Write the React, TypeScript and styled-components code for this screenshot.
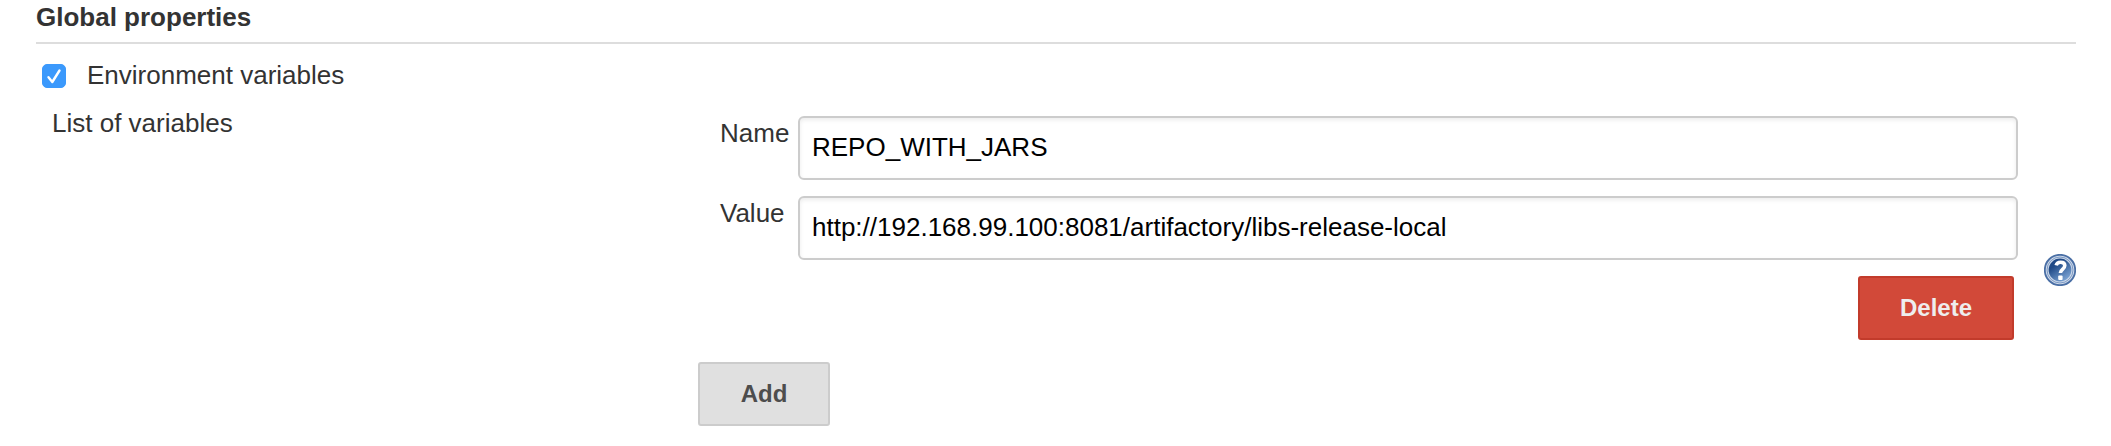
import React, { useState } from "react";
import styled, { createGlobalStyle } from "styled-components";

const GlobalStyle = createGlobalStyle`
  *, *::before, *::after { box-sizing: border-box; }
  body {
    margin: 0;
    background: #fff;
    color: #333;
    font-family: Helvetica, "Liberation Sans", Arial, sans-serif;
    font-size: 26px;
    line-height: 30px;
  }
`;

const Page = styled.main`
  padding: 2px 35px 14px 36px;
`;

const SectionTitle = styled.h2`
  margin: 0;
  padding-bottom: 10px;
  border-bottom: 2px solid #ddd;
  font-size: 26px;
  line-height: 30px;
  font-weight: bold;
`;

const OptionRow = styled.label`
  display: flex;
  align-items: flex-start;
  gap: 21px;
  padding: 16px 6px 18px;
`;

const CheckBox = styled.span`
  display: grid;
  width: 24px;
  height: 24px;
  margin-top: 4px;

  & > * {
    grid-area: 1 / 1;
  }
`;

const CheckInput = styled.input`
  appearance: none;
  width: 24px;
  height: 24px;
  margin: 0;
  border: 1px solid #b5b5b5;
  border-radius: 5px;
  background: #fff;

  &:checked {
    border-color: #3b99fc;
    background: #3b99fc;
  }
`;

const Tick = styled.svg`
  width: 24px;
  height: 24px;
  pointer-events: none;
`;

const SettingRow = styled.section`
  display: grid;
  grid-template-columns: 662fr 1346fr 32px;
`;

const SettingName = styled.div`
  padding-left: 16px;
`;

const SettingMain = styled.div`
  margin-right: 26px;
  padding: 8px 0 6px;
`;

const Variable = styled.div`
  display: flex;
  flex-direction: column;
  gap: 16px;
  padding-left: 22px;
`;

const Field = styled.div`
  display: grid;
  grid-template-columns: 78px 1fr;
`;

const FieldLabel = styled.label`
  padding-top: 2px;
`;

const TextInput = styled.input`
  width: 100%;
  height: 64px;
  padding: 0 12px 2px;
  border: 2px solid #ccc;
  border-radius: 6px;
  background: #fff;
  box-shadow: inset 0 2px 4px rgba(0, 0, 0, 0.08);
  color: #000;
  font: inherit;
`;

const Actions = styled.div<{ $end?: boolean }>`
  display: flex;
  justify-content: ${(p) => (p.$end ? "flex-end" : "flex-start")};
  padding-right: 4px;
`;

const AddRow = styled(Actions)`
  padding-top: 22px;
`;

const Button = styled.button<{ $danger?: boolean }>`
  height: 64px;
  min-width: 132px;
  padding: 0 40px;
  border: 2px solid ${(p) => (p.$danger ? "#c23b2b" : "#ccc")};
  border-radius: 3px;
  background: ${(p) => (p.$danger ? "#d24939" : "#e0e0e0")};
  color: ${(p) => (p.$danger ? "#eee" : "#4d4d4d")};
  font-family: inherit;
  font-size: 24px;
  font-weight: bold;
  line-height: 30px;
`;

const HelpButton = styled.button`
  align-self: center;
  width: 32px;
  height: 32px;
  padding: 0;
  border: 0;
  background: none;

  svg {
    display: block;
  }
`;

function HelpIcon() {
  return (
    <svg width="32" height="32" viewBox="0 0 32 32" aria-hidden="true">
      <defs>
        <linearGradient id="disc" x1="0.2" y1="0.1" x2="0.8" y2="0.95">
          <stop offset="0.2" stopColor="#204a87" />
          <stop offset="1" stopColor="#7ea6d6" />
        </linearGradient>
      </defs>
      <circle cx="16" cy="16" r="15.2" fill="#cfdaea" stroke="#4a6fa5" strokeWidth="1.8" />
      <circle cx="16" cy="16" r="13" fill="none" stroke="#7d9ac4" strokeWidth="1" />
      <circle cx="16" cy="16" r="11.4" fill="url(#disc)" />
      <path
        d="M12.2 11.4C12.6 9.2 14.4 8.2 16.6 8.2c2.6 0 4.2 1.3 4.2 3.4 0 3.8-4.4 3.8-4.4 7.4"
        fill="none"
        stroke="#fff"
        strokeWidth="3.6"
        strokeLinejoin="round"
      />
      <rect x="14.2" y="21.6" width="4.4" height="4.4" rx="1" fill="#fff" />
    </svg>
  );
}

function VariableField({ id, label, initial }: { id: string; label: string; initial: string }) {
  const [value, setValue] = useState(initial);
  return (
    <Field>
      <FieldLabel htmlFor={id}>{label}</FieldLabel>
      <TextInput id={id} type="text" value={value} onChange={(e) => setValue(e.target.value)} />
    </Field>
  );
}

export default function App() {
  const [enabled, setEnabled] = useState(true);
  return (
    <>
      <GlobalStyle />
      <Page>
        <SectionTitle>Global properties</SectionTitle>
        <OptionRow>
          <CheckBox>
            <CheckInput
              type="checkbox"
              checked={enabled}
              onChange={(e) => setEnabled(e.target.checked)}
            />
            {enabled && (
              <Tick viewBox="0 0 24 24" aria-hidden="true">
                <path
                  d="M6.5 13.2 10.3 18 17.5 6.5"
                  fill="none"
                  stroke="#fff"
                  strokeWidth="2.4"
                  strokeLinecap="round"
                  strokeLinejoin="round"
                />
              </Tick>
            )}
          </CheckBox>
          <span>Environment variables</span>
        </OptionRow>
        <SettingRow>
          <SettingName>List of variables</SettingName>
          <SettingMain>
            <Variable>
              <VariableField id="variable-name" label="Name" initial="REPO_WITH_JARS" />
              <VariableField
                id="variable-value"
                label="Value"
                initial="http://192.168.99.100:8081/artifactory/libs-release-local"
              />
              <Actions $end>
                <Button type="button" $danger>
                  Delete
                </Button>
              </Actions>
            </Variable>
            <AddRow>
              <Button type="button">Add</Button>
            </AddRow>
          </SettingMain>
          <HelpButton type="button" aria-label="Help">
            <HelpIcon />
          </HelpButton>
        </SettingRow>
      </Page>
    </>
  );
}
